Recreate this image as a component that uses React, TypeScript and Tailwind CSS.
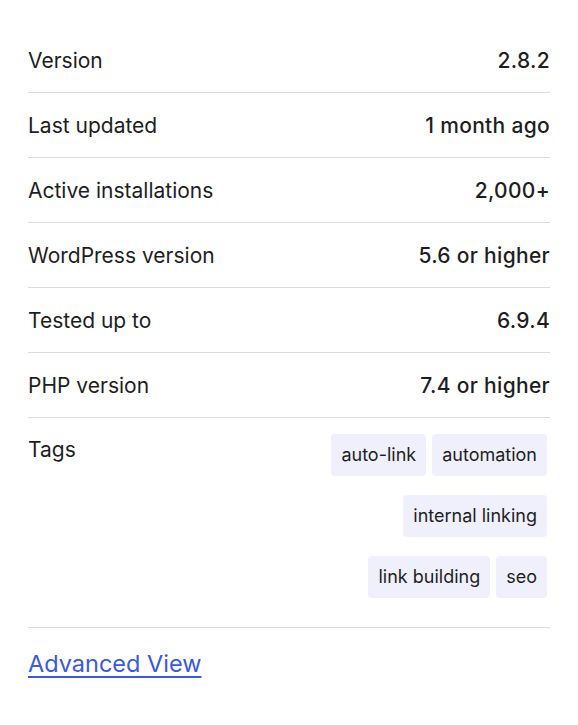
const rows = [
  { label: 'Version', value: '2.8.2' },
  { label: 'Last updated', value: '1 month ago' },
  { label: 'Active installations', value: '2,000+' },
  { label: 'WordPress version', value: '5.6 or higher' },
  { label: 'Tested up to', value: '6.9.4' },
  { label: 'PHP version', value: '7.4 or higher' },
];

const tags = ['auto-link', 'automation', 'internal linking', 'link building', 'seo'];

export default function App() {
  return (
    <div className="min-h-screen bg-white px-[28px] pt-[28px] text-[#1e1e1e] font-['Inter',sans-serif]">
      <ul>
        {rows.map((row) => (
          <li
            key={row.label}
            className="flex items-center justify-between border-b border-[#dcdcde] pt-[19px] pb-[17px] text-[21px] leading-7"
          >
            <span>{row.label}</span>
            <span className="font-medium tracking-[0.015em]">{row.value}</span>
          </li>
        ))}
        <li className="flex items-start justify-between border-b border-[#dcdcde] pt-[16px] pb-[29px]">
          <span className="pt-[2px] text-[21px] leading-7">Tags</span>
          <div className="flex max-w-[230px] flex-wrap justify-end gap-x-[6px] gap-y-[19px] pr-[3px]">
            {tags.map((tag) => (
              <span
                key={tag}
                className="rounded-sm bg-[#eff0fb] px-[10px] py-[9px] text-[18px] leading-6"
              >
                {tag}
              </span>
            ))}
          </div>
        </li>
      </ul>
      <a
        href="#"
        className="mt-[20px] inline-block text-[23.5px] leading-8 text-[#3858e9] underline underline-offset-[4px]"
      >
        Advanced View
      </a>
    </div>
  );
}
